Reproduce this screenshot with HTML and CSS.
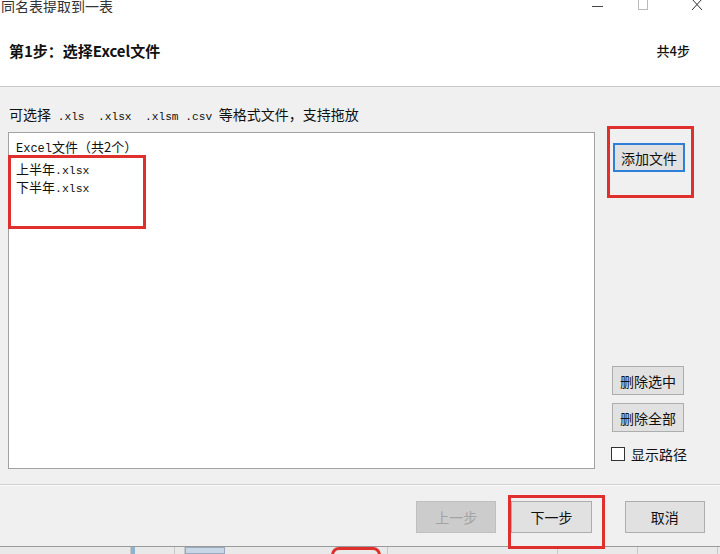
FILE: index.html
```html
<!DOCTYPE html>
<html lang="zh">
<head>
<meta charset="utf-8">
<title>同名表提取到一表</title>
<link rel="stylesheet" href="styles.css">
</head>
<body>
<div class="window">
  <div class="titlebar">
    <span class="title">同名表提取到一表</span>
    <div class="controls">
      <span class="ctl ctl-min"></span>
      <span class="ctl ctl-max"></span>
      <svg class="ctl-close" width="12" height="12" viewBox="0 0 12 12"><path d="M1 0 L11 11 M11 0 L1 11" stroke="#333" stroke-width="1"/></svg>
    </div>
  </div>
  <div class="header">
    <span class="step">第1步：选择Excel文件</span>
    <span class="total">共4步</span>
  </div>
  <div class="main">
    <div class="left">
      <div class="hint">可选择<span class="mono">&nbsp;.xls&nbsp;&nbsp;.xlsx&nbsp;&nbsp;.xlsm .csv&nbsp;</span>等格式文件，支持拖放</div>
      <div class="listbox">
        <div class="list-head"><span class="mono">Excel</span>文件（共2个）</div>
        <div class="item">上半年<span class="mono">.xlsx</span></div>
        <div class="item">下半年<span class="mono">.xlsx</span></div>
      </div>
    </div>
    <div class="right">
      <button class="btn btn-focus">添加文件</button>
      <div class="spacer"></div>
      <button class="btn">删除选中</button>
      <button class="btn">删除全部</button>
      <label class="check"><span class="box"></span>显示路径</label>
    </div>
  </div>
  <div class="footer">
    <button class="btn btn-nav" disabled>上一步</button>
    <button class="btn btn-nav">下一步</button>
    <button class="btn btn-nav btn-cancel">取消</button>
  </div>
</div>
<div class="sheet">
  <span class="cell c1"></span>
  <span class="cell c2"></span>
  <span class="cell c3"></span>
  <span class="cell c4"></span>
  <span class="cell c5"></span>
  <span class="cell c6"></span>
  <span class="cell c7"></span>
  <span class="cell c8"></span>
  <span class="cell c9"></span>
</div>
<div class="mark mark-list"></div>
<div class="mark mark-add"></div>
<div class="mark mark-next"></div>
<div class="mark mark-sheet"></div>
</body>
</html>
```
FILE: styles.css
```css
* { box-sizing: border-box; }
html, body { margin: 0; padding: 0; }
body {
  width: 720px;
  height: 554px;
  overflow: hidden;
  position: relative;
  background: #e6e6e6;
  font-family: "Noto Sans CJK SC", "Noto Sans", sans-serif;
  color: #111;
}
.mono { font-family: "Liberation Mono", "Noto Sans CJK SC", monospace; }
.window {
  height: 547px;
  background: #f0f0f0;
  border-bottom: 1px solid #9a9a9a;
  display: flex;
  flex-direction: column;
}
.titlebar {
  height: 13px;
  background: #fff;
  display: flex;
  justify-content: space-between;
  overflow: hidden;
}
.title {
  font-size: 14px;
  line-height: 13px;
  color: #333;
  padding-left: 1px;
}
.controls {
  display: flex;
  align-items: flex-start;
  padding-right: 17px;
}
.ctl-min {
  width: 11px;
  height: 1px;
  background: #444;
  margin-top: 6px;
  margin-right: 35px;
}
.ctl-max {
  width: 10px;
  height: 10px;
  border: 1px solid #bbb;
  border-top: none;
  margin-right: 43px;
}
.ctl-close { display: block; margin-top: -1px; }
.header {
  height: 74px;
  background: #fff;
  border-bottom: 1px solid #c9c9c9;
  display: flex;
  justify-content: space-between;
  align-items: center;
  padding: 2px 30px 0 9px;
}
.step { font-size: 15px; font-weight: 700; }
.total { font-size: 13px; font-weight: 500; }
.main {
  flex: 1;
  display: flex;
  padding: 0 0 0 8px;
  border-bottom: 1px solid #d2d2d2;
  box-shadow: 0 1px 0 #fafafa;
}
.left {
  width: 587px;
  display: flex;
  flex-direction: column;
}
.hint {
  font-size: 14px;
  height: 45px;
  padding-top: 17px;
  padding-left: 1px;
  line-height: 20px;
}
.hint .mono { font-size: 11.2px; }
.listbox {
  height: 337px;
  background: #fff;
  border: 1px solid #a2a2a2;
  padding: 5px 0 0 7px;
  font-size: 13px;
}
.list-head { line-height: 18px; height: 18px; }
.list-head .mono { font-size: 12px; }
.item { line-height: 18px; height: 18px; }
.list-head + .item { margin-top: 4px; }
.item .mono { font-size: 11.5px; }
.right {
  flex: 1;
  display: flex;
  flex-direction: column;
  align-items: flex-start;
  padding: 56px 0 0 17px;
}
.btn {
  font-family: "Noto Sans CJK SC", sans-serif;
  font-size: 14px;
  color: #111;
  background: #e1e1e1;
  border: 1px solid #adadad;
  width: 72px;
  height: 29px;
  padding: 0;
  line-height: 26px;
}
.btn-focus {
  border: 2px solid #2f7fd8;
  margin-left: 1px;
}
.spacer { height: 194px; }
.right .btn + .btn { margin-top: 8px; }
.check {
  display: flex;
  align-items: center;
  font-size: 14px;
  margin-top: 12px;
  margin-left: -1px;
  gap: 6px;
}
.box {
  width: 14px;
  height: 14px;
  border: 1px solid #333;
  background: #fff;
}
.footer {
  height: 61px;
  display: flex;
  align-items: flex-start;
  padding: 16px 0 0 416px;
}
.btn-nav {
  width: 81px;
  height: 32px;
  line-height: 29px;
  margin-right: 15px;
}
.btn-nav[disabled] {
  background: #cccccc;
  border-color: #bfbfbf;
  color: #a3a3a3;
}
.btn-cancel { margin-left: 18px; }
.sheet {
  height: 7px;
  display: flex;
  background: #e9e9e9;
}
.cell { height: 100%; border-right: 1px solid #c8c8c8; }
.c1 { width: 131px; }
.c2 { width: 4px; background: #8fb3c8; border: none; }
.c3 { width: 40px; }
.c4 { width: 10px; }
.c5 { width: 40px; background: #c9d6e6; border: 1px solid #9aa9bd; }
.c6 { width: 163px; }
.c7 { width: 170px; }
.c8 { width: 80px; }
.c9 { width: 80px; }
.mark {
  position: absolute;
  border: 3px solid #e0302e;
}
.mark-list { left: 8px; top: 155px; width: 138px; height: 74px; }
.mark-add { left: 607px; top: 126px; width: 87px; height: 72px; }
.mark-next { left: 508px; top: 495px; width: 97px; height: 54px; }
.mark-sheet {
  left: 331px; top: 547px; width: 50px; height: 20px;
  border-radius: 8px;
}
```
